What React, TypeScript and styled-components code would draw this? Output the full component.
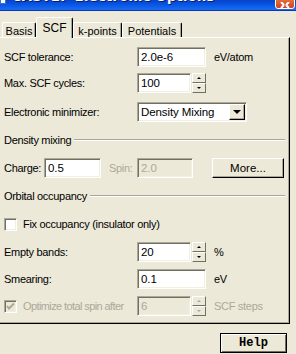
import React from 'react';
import styled, {createGlobalStyle} from 'styled-components';

const GlobalStyle = createGlobalStyle`
  html, body {
    margin: 0;
    padding: 0;
    background: #ECE9D8;
  }
  * {
    box-sizing: border-box;
  }
`;

const Window = styled.div`
  width: 296px;
  height: 354px;
  overflow: hidden;
  background: #ECE9D8;
  font-family: "Liberation Sans", Arial, sans-serif;
  font-size: 11px;
  letter-spacing: -0.3px;
  color: #000;
`;

const TitleBar = styled.div`
  position: relative;
  height: 11px;
  overflow: hidden;
  background: linear-gradient(#0842C8, #0A5CEB 60%, #1E6CF0);
  border-bottom: 1px solid #0638B8;
  display: flex;
  align-items: flex-start;
  gap: 6px;
`;

const AppIcon = styled.div`
  width: 6px;
  height: 4px;
  background: #ffffff;
  border: 1px solid #3A6FD8;
  border-top: none;
`;

const TitleText = styled.span`
  margin-top: -10px;
  font-family: "DejaVu Sans", sans-serif;
  font-weight: bold;
  font-size: 13px;
  line-height: 13px;
  letter-spacing: 0.3px;
  color: #ffffff;
  text-shadow: 1px 1px #0A1E6A;
  white-space: nowrap;
`;

const CloseButton = styled.div`
  position: absolute;
  right: 1px;
  top: -4px;
  width: 20px;
  height: 13px;
  border-radius: 3px;
  border: 1px solid #ffffff;
  background: linear-gradient(#E5824E, #D5401A);
  display: flex;
  justify-content: center;
  align-items: flex-end;
`;

const TabRow = styled.div`
  display: flex;
  align-items: flex-end;
  height: 26px;
  padding-left: 2px;
  position: relative;
  z-index: 2;
`;

const Tab = styled.div<{ $w: number; $active?: boolean }>`
  width: ${p => p.$w}px;
  height: ${p => (p.$active ? 21 : 15)}px;
  margin-bottom: ${p => (p.$active ? -1 : 0)}px;
  background: #ECE9D8;
  border-top: 1px solid #ffffff;
  border-left: 1px solid #ffffff;
  border-right: 1px solid #000000;
  box-shadow: inset -1px 0 #ACA899;
  border-radius: 2px 2px 0 0;
  display: flex;
  align-items: center;
  justify-content: center;
  font-size: ${p => (p.$active ? 12 : 11)}px;
  letter-spacing: 0;
  padding-top: ${p => (p.$active ? 0 : 1)}px;
`;

const Panel = styled.div`
  margin-left: -1px;
  width: 291px;
  border-top: 1px solid #ffffff;
  border-left: 1px solid #ffffff;
  border-right: 1px solid #000000;
  border-bottom: 1px solid #000000;
  box-shadow: inset -1px -1px #ACA899;
  padding: 0 0 7px 4px;
`;

const Row = styled.div<{ $top: number; $h?: number }>`
  display: flex;
  align-items: center;
  height: ${p => p.$h ?? 20}px;
  margin-top: ${p => p.$top}px;
`;

const Label = styled.span<{ $w?: number; $disabled?: boolean; $tight?: boolean }>`
  width: ${p => (p.$w ? `${p.$w}px` : 'auto')};
  flex-shrink: 0;
  color: ${p => (p.$disabled ? '#ACA899' : '#000')};
  letter-spacing: ${p => (p.$tight ? -0.6 : -0.3)}px;
  white-space: nowrap;
`;

const Unit = styled.span<{ $disabled?: boolean }>`
  margin-left: 8px;
  color: ${p => (p.$disabled ? '#ACA899' : '#000')};
  white-space: nowrap;
`;

const TextBox = styled.div<{ $w: number; $disabled?: boolean }>`
  width: ${p => p.$w}px;
  height: 20px;
  flex-shrink: 0;
  background: ${p => (p.$disabled ? '#ECE9D8' : '#ffffff')};
  border-top: 1px solid #ACA899;
  border-left: 1px solid #ACA899;
  border-right: 1px solid #ffffff;
  border-bottom: 1px solid #ffffff;
  box-shadow: inset 1px 1px #716F64, inset -1px -1px #F1EFE2;
  padding: 0 0 0 3px;
  display: flex;
  align-items: center;
  font-size: 11.5px;
  letter-spacing: -0.1px;
  color: ${p => (p.$disabled ? '#ACA899' : '#000')};
`;

const Spinner = styled.div`
  display: flex;
  flex-direction: column;
  width: 14px;
  height: 20px;
  margin-left: 1px;
`;

const SpinHalf = styled.div`
  flex: 1;
  background: #ECE9D8;
  border-top: 1px solid #ffffff;
  border-left: 1px solid #ffffff;
  border-right: 1px solid #716F64;
  border-bottom: 1px solid #716F64;
  display: flex;
  align-items: center;
  justify-content: center;
`;

const Arrow = styled.div<{ $up?: boolean; $disabled?: boolean; $size?: number }>`
  width: 0;
  height: 0;
  border-left: ${p => p.$size ?? 2}px solid transparent;
  border-right: ${p => p.$size ?? 2}px solid transparent;
  ${p => (p.$up ? 'border-bottom' : 'border-top')}: ${p => p.$size ?? 2}px solid ${p => (p.$disabled ? '#ACA899' : '#000')};
`;

const Combo = styled(TextBox)`
  padding-right: 1px;
  justify-content: space-between;
`;

const DropButton = styled.div`
  width: 16px;
  height: 16px;
  background: #ECE9D8;
  border-top: 1px solid #ffffff;
  border-left: 1px solid #ffffff;
  border-right: 1px solid #000000;
  border-bottom: 1px solid #000000;
  box-shadow: inset -1px -1px #ACA899;
  display: flex;
  align-items: center;
  justify-content: center;
`;

const Group = styled.div<{ $top: number }>`
  display: flex;
  align-items: center;
  gap: 3px;
  height: 12px;
  margin-top: ${p => p.$top}px;
  padding-right: 4px;
`;

const GroupLine = styled.div`
  flex: 1;
  height: 2px;
  border-top: 1px solid #ACA899;
  border-bottom: 1px solid #ffffff;
`;

const Button = styled.div<{ $w: number; $default?: boolean }>`
  width: ${p => p.$w}px;
  height: 20px;
  flex-shrink: 0;
  background: #ECE9D8;
  border: 1px solid ${p => (p.$default ? '#000' : '#ffffff')};
  border-right-color: #000;
  border-bottom-color: #000;
  box-shadow: ${p => (p.$default
    ? 'inset 1px 1px #ffffff, inset -1px -1px #716F64'
    : 'inset -1px -1px #ACA899')};
  display: flex;
  align-items: center;
  justify-content: center;
  font-size: 11.5px;
  letter-spacing: 0;
`;

const Spacer = styled.div<{ $w: number }>`
  width: ${p => p.$w}px;
  flex-shrink: 0;
`;

const CheckBox = styled.div<{ $disabled?: boolean }>`
  width: 13px;
  height: 13px;
  flex-shrink: 0;
  margin-right: 6px;
  background: ${p => (p.$disabled ? '#ECE9D8' : '#ffffff')};
  border-top: 1px solid #ACA899;
  border-left: 1px solid #ACA899;
  border-right: 1px solid #ffffff;
  border-bottom: 1px solid #ffffff;
  box-shadow: inset 1px 1px #716F64, inset -1px -1px #F1EFE2;
  display: flex;
  align-items: center;
  justify-content: center;
`;

const Footer = styled.div`
  display: flex;
  justify-content: flex-end;
  margin-top: 9px;
  padding-right: 9px;
`;

const HelpLabel = styled.span`
  font-family: "Liberation Mono", "DejaVu Sans Mono", monospace;
  font-weight: bold;
  font-size: 12px;
`;

const SpinBox = ({value, disabled}: { value: string; disabled?: boolean }) => (
    <>
        <TextBox $w={54} $disabled={disabled}>{value}</TextBox>
        <Spinner>
            <SpinHalf><Arrow $up $disabled={disabled}/></SpinHalf>
            <SpinHalf><Arrow $disabled={disabled}/></SpinHalf>
        </Spinner>
    </>
);

const App = () => {
    return (
        <Window>
            <GlobalStyle/>
            <TitleBar>
                <AppIcon/>
                <TitleText>CASTEP Electronic Options</TitleText>
                <CloseButton>
                    <svg width="10" height="6" viewBox="0 0 10 6">
                        <path d="M1 0 L4 3 M9 0 L6 3 M4 3 L1 6 M6 3 L9 6" stroke="#fff" strokeWidth="2"/>
                    </svg>
                </CloseButton>
            </TitleBar>

            <TabRow>
                <Tab $w={34}>Basis</Tab>
                <Tab $w={37} $active>SCF</Tab>
                <Tab $w={49}>k-points</Tab>
                <Tab $w={60}>Potentials</Tab>
            </TabRow>

            <Panel>
                <Row $top={9}>
                    <Label $w={133}>SCF tolerance:</Label>
                    <TextBox $w={69}>2.0e-6</TextBox>
                    <Unit>eV/atom</Unit>
                </Row>
                <Row $top={6}>
                    <Label $w={133}>Max. SCF cycles:</Label>
                    <SpinBox value="100"/>
                </Row>
                <Row $top={8} $h={21}>
                    <Label $w={133}>Electronic minimizer:</Label>
                    <Combo $w={110}>
                        <span>Density Mixing</span>
                        <DropButton><Arrow $size={4}/></DropButton>
                    </Combo>
                </Row>

                <Group $top={12}>
                    <Label>Density mixing</Label>
                    <GroupLine/>
                </Group>
                <Row $top={12}>
                    <Label $w={40}>Charge:</Label>
                    <TextBox $w={57}>0.5</TextBox>
                    <Spacer $w={8}/>
                    <Label $w={28} $disabled>Spin:</Label>
                    <TextBox $w={56} $disabled>2.0</TextBox>
                    <Spacer $w={19}/>
                    <Button $w={72}>More...</Button>
                </Row>

                <Group $top={12}>
                    <Label>Orbital occupancy</Label>
                    <GroupLine/>
                </Group>
                <Row $top={15} $h={14}>
                    <CheckBox/>
                    <Label>Fix occupancy (insulator only)</Label>
                </Row>
                <Row $top={11}>
                    <Label $w={133}>Empty bands:</Label>
                    <SpinBox value="20"/>
                    <Unit>%</Unit>
                </Row>
                <Row $top={7}>
                    <Label $w={133}>Smearing:</Label>
                    <TextBox $w={69}>0.1</TextBox>
                    <Unit>eV</Unit>
                </Row>
                <Row $top={7}>
                    <CheckBox $disabled>
                        <svg width="9" height="9" viewBox="0 0 9 9">
                            <path d="M1 4 L3 6.5 L8 1.5" stroke="#ACA899" strokeWidth="2" fill="none"/>
                        </svg>
                    </CheckBox>
                    <Label $w={114} $disabled $tight>Optimize total spin after</Label>
                    <SpinBox value="6" disabled/>
                    <Unit $disabled>SCF steps</Unit>
                </Row>
            </Panel>

            <Footer>
                <Button $w={67} $default><HelpLabel>Help</HelpLabel></Button>
            </Footer>
        </Window>
    );
};

export default App;
